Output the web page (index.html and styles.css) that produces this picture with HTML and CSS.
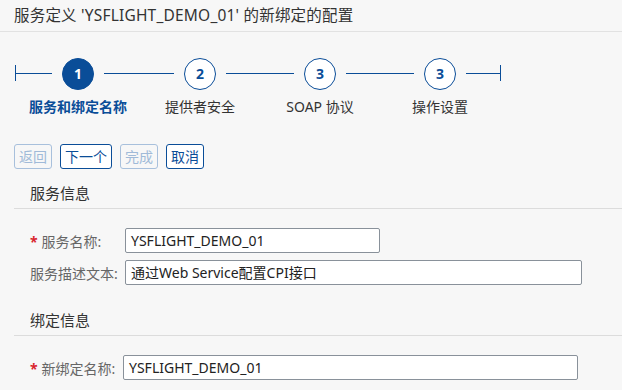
FILE: index.html
```html
<!DOCTYPE html>
<html lang="zh">
  <head>
    <meta charset="utf-8" />
    <title>新绑定</title>
    <link rel="stylesheet" href="styles.css">
  </head>
  <body>
    <div class="title">服务定义 'YSFLIGHT_DEMO_01' 的新绑定的配置</div>

    <div class="steps">
      <div class="tick"></div>
      <div class="line w37"></div>
      <div class="step">
        <div class="circle active">1</div>
        <div class="label current">服务和绑定名称</div>
      </div>
      <div class="line w70"></div>
      <div class="step">
        <div class="circle">2</div>
        <div class="label">提供者安全</div>
      </div>
      <div class="line w68"></div>
      <div class="step">
        <div class="circle">3</div>
        <div class="label">SOAP 协议</div>
      </div>
      <div class="line w67"></div>
      <div class="step">
        <div class="circle">3</div>
        <div class="label">操作设置</div>
      </div>
      <div class="line w34"></div>
      <div class="tick"></div>
    </div>

    <div class="buttons">
      <button type="button" class="btn" disabled>返回</button>
      <button type="button" class="btn">下一个</button>
      <button type="button" class="btn" disabled>完成</button>
      <button type="button" class="btn">取消</button>
    </div>

    <div class="section">
      <div class="sectionHead">服务信息</div>
      <div class="form">
        <div class="row">
          <label class="lbl"><span class="req">*</span>服务名称:</label>
          <div class="field w255">YSFLIGHT_DEMO_01</div>
        </div>
        <div class="row">
          <label class="lbl">服务描述文本:</label>
          <div class="field w457">通过Web Service配置CPI接口</div>
        </div>
      </div>
    </div>

    <div class="section second">
      <div class="sectionHead">绑定信息</div>
      <div class="form">
        <div class="row">
          <label class="lbl narrow"><span class="req">*</span>新绑定名称:</label>
          <div class="field w455">YSFLIGHT_DEMO_01</div>
        </div>
      </div>
    </div>
  </body>
</html>
```

FILE: styles.css
```css
body {
  margin: 0;
  background-color: #f7f7f7;
  font-family: "Noto Sans", "Noto Sans CJK SC", sans-serif;
  color: #333333;
}

.title {
  height: 31px;
  line-height: 30px;
  padding-left: 14px;
  font-size: 15.5px;
  letter-spacing: 0.2px;
  color: #333333;
  border-bottom: 1px solid #e2e2e2;
}

/* wizard steps */
.steps {
  display: flex;
  align-items: flex-start;
  padding: 26px 0 0 15px;
}
.tick {
  width: 1px;
  height: 16px;
  margin-top: 7px;
  background-color: #0a4d98;
}
.line {
  height: 1px;
  margin-top: 15px;
  background-color: #0a4d98;
}
.w37 { width: 36px; }
.w70 { width: 70px; }
.w68 { width: 68px; }
.w67 { width: 68px; }
.w34 { width: 34px; }

.step {
  width: 32px;
  margin: 0 10px;
  display: flex;
  flex-direction: column;
  align-items: center;
}
.circle {
  box-sizing: border-box;
  width: 32px;
  height: 32px;
  border-radius: 50%;
  border: 1px solid #0a4d98;
  background-color: #ffffff;
  color: #0a4d98;
  font-weight: bold;
  font-size: 14px;
  line-height: 30px;
  text-align: center;
}
.circle.active {
  background-color: #0a4d98;
  color: #ffffff;
}
.label {
  margin-top: 7px;
  white-space: nowrap;
  font-size: 14px;
  line-height: 20px;
  color: #333333;
}
.label.current {
  color: #0a4d98;
  font-weight: bold;
}

/* buttons */
.buttons {
  display: flex;
  gap: 8px;
  padding: 27px 0 0 14px;
}
.btn {
  box-sizing: border-box;
  height: 25px;
  padding: 0 4px;
  border: 1px solid #0a4d98;
  border-radius: 3px;
  background-color: #ffffff;
  color: #0a4d98;
  font-family: "Noto Sans", "Noto Sans CJK SC", sans-serif;
  font-size: 14px;
  line-height: 22px;
}
.btn:disabled {
  border-color: #a8c0dc;
  color: #a0bad8;
  background-color: transparent;
}

/* form sections */
.section {
  margin: 14px 0 0 14px;
}
.section.second {
  margin-top: 25px;
}
.sectionHead {
  padding: 0 0 5px 16px;
  font-size: 15px;
  line-height: 20px;
  color: #333333;
  border-bottom: 1px solid #dcdcdc;
}
.form {
  display: flex;
  flex-direction: column;
  gap: 7px;
  padding: 19px 0 0 16px;
}
.row {
  display: flex;
  align-items: center;
}
.lbl {
  width: 95px;
  font-size: 14px;
  color: #666666;
  white-space: nowrap;
}
.lbl.narrow {
  width: 93px;
}
.req {
  color: #d9252f;
  font-weight: bold;
  margin-right: 4px;
}
.field {
  box-sizing: border-box;
  height: 25px;
  padding-left: 5px;
  border: 1px solid #89919a;
  border-radius: 2px;
  background-color: #ffffff;
  font-size: 14px;
  line-height: 23px;
  color: #222222;
}
.w255 { width: 255px; }
.w457 { width: 457px; }
.w455 { width: 455px; }
```
